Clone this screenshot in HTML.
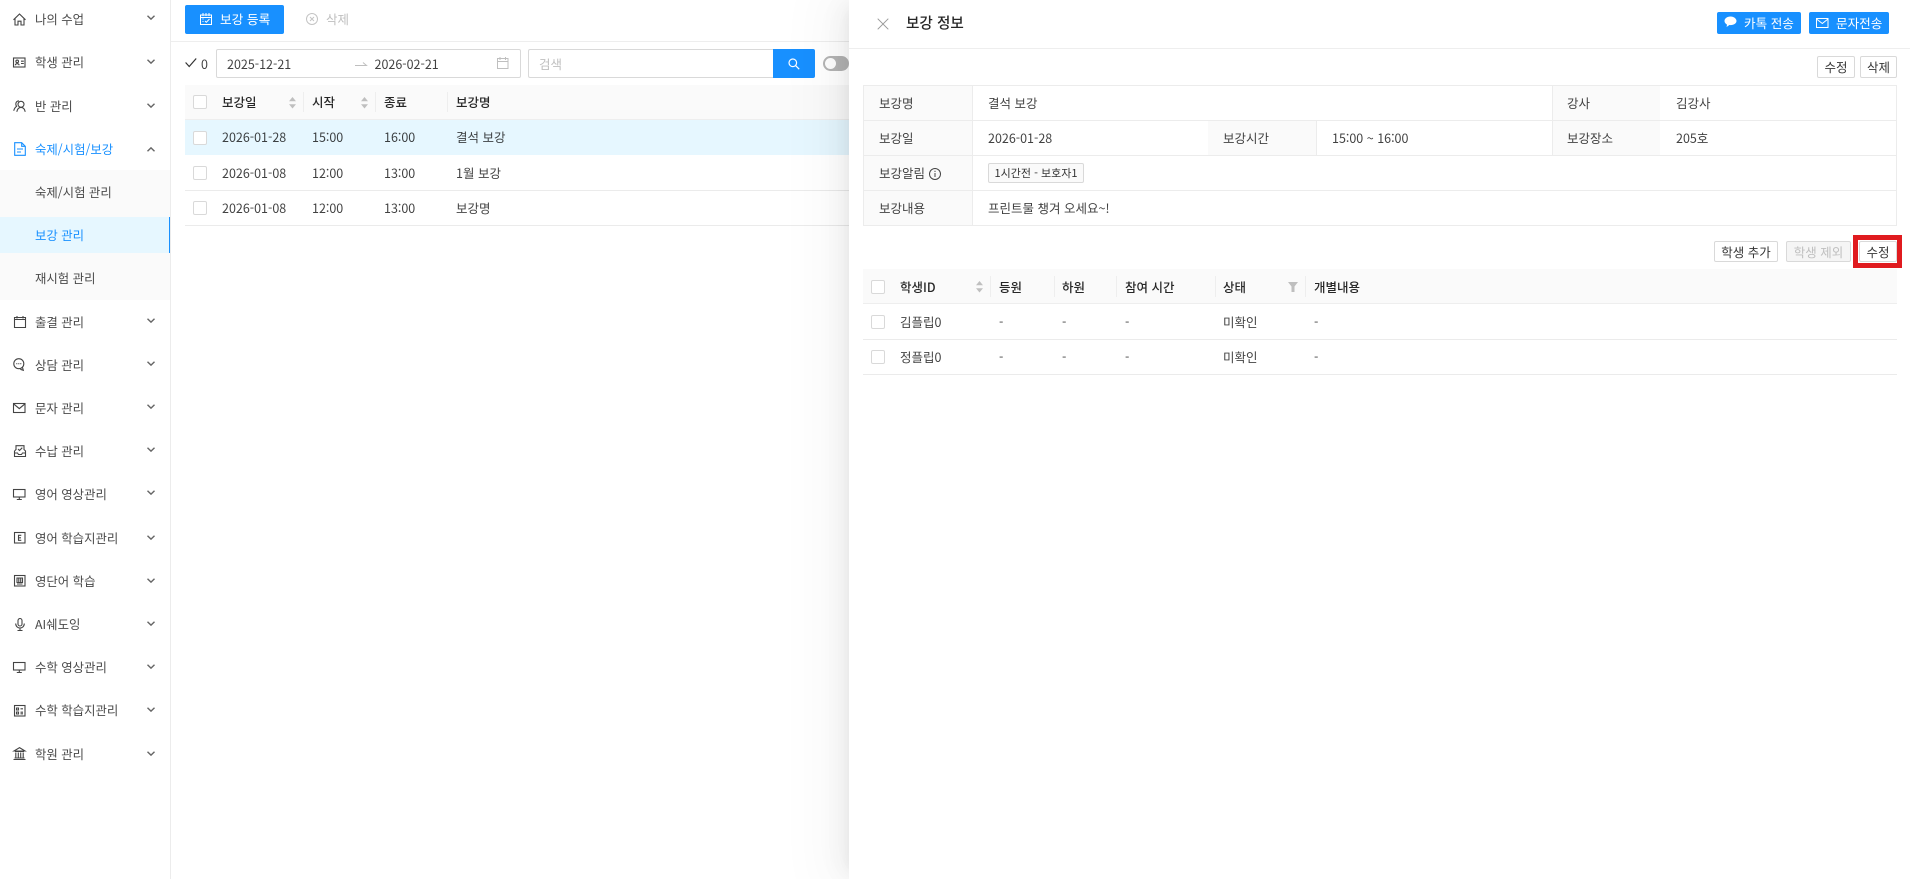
<!DOCTYPE html>
<html lang="ko"><head><meta charset="utf-8"><title>보강 관리</title>
<style>
*{box-sizing:border-box}
html,body{margin:0;padding:0;width:1910px;height:879px;overflow:hidden;background:#fff}
body{position:relative;font-family:"Liberation Sans","Noto Sans CJK KR",sans-serif;font-size:13px;color:#333}
#w{position:absolute;left:0;top:0;width:1910px;height:879px;filter:blur(.3px);overflow:hidden}
.t{position:absolute;height:20px;line-height:20px;white-space:nowrap;font-family:"Noto Sans CJK KR","Liberation Sans",sans-serif;font-size:12.5px;color:rgba(0,0,0,.75)}
.b{position:absolute}
.m{font-size:12.4px;color:#4a4a4a}
.h{font-weight:500;color:rgba(0,0,0,.85)}
.ck{position:absolute;width:14px;height:14px;border:1px solid #d9d9d9;border-radius:2px;background:#fff}
.dv{position:absolute;width:1px;background:#eee}
.ln{position:absolute;height:1px;background:#ebebeb}
.btn{position:absolute;border:1px solid #d9d9d9;border-radius:2px;background:#fff;text-align:center;font-family:"Noto Sans CJK KR",sans-serif;font-size:12.5px;color:rgba(0,0,0,.8);white-space:nowrap}
.pb{position:absolute;background:#1890ff;border-radius:2px;color:#fff}
svg{position:absolute;overflow:visible}
.ic{fill:none;stroke:#444;stroke-width:1.1}
.ch{fill:none;stroke:#666;stroke-width:1.4}
</style></head><body><div id="w">

<!-- sidebar -->
<div class="b" style="left:170px;top:0;width:1px;height:879px;background:#ececec"></div>
<div class="b" style="left:0;top:170px;width:170px;height:130px;background:#fafafa"></div>
<div class="b" style="left:0;top:217px;width:170px;height:36px;background:#e6f7ff;border-right:1px solid #1890ff"></div>

<svg class="ic" style="left:13px;top:13px" width="13" height="13" viewBox="0 0 13 13"><path d="M.5 6.800 6.500 1l6 5.800M2 5.600V12h3V8.200h3V12h3V5.600"/></svg>
<div class="t m" style="left:35px;top:9px">나의 수업</div>
<svg class="ic" style="left:13px;top:57px" width="13" height="11" viewBox="0 0 13 11"><rect x=".5" y="1" width="11.500" height="9"/><circle cx="4.200" cy="4.400" r="1.300"/><path d="M2.200 8.200c.5-2 3.500-2 4 0M8 4.200h2.800M8 6.500h2.800"/></svg>
<div class="t m" style="left:35px;top:52px">학생 관리</div>
<svg class="ic" style="left:13px;top:100px" width="14" height="13" viewBox="0 0 14 13"><circle cx="8" cy="4.300" r="3"/><path d="M3.800 11.800c.5-2.800 2-4.400 4.200-4.400s3.700 1.600 4.200 4.400M6 .9C4 .8 2.800 2.200 2.800 4c0 .9.300 1.700.8 2.300C2.200 7.300 1.200 8.800.7 10.800"/></svg>
<div class="t m" style="left:35px;top:96px">반 관리</div>
<svg class="ic" style="left:14px;top:142px;stroke:#1890ff" width="12" height="14" viewBox="0 0 12 14"><path d="M.7.700h7l3.600 3.600v9H.7zM7.700.700v3.600h3.600M3 7h6M3 10h4"/></svg>
<div class="t m" style="left:35px;top:139px;color:#1890ff">숙제/시험/보강</div>
<div class="t m" style="left:35px;top:182px">숙제/시험 관리</div>
<div class="t m" style="left:35px;top:225px;color:#1890ff">보강 관리</div>
<div class="t m" style="left:35px;top:268px">재시험 관리</div>
<svg class="ic" style="left:14px;top:316px" width="12" height="12" viewBox="0 0 12 12"><path d="M.5 1.500h11v10H.5zM.5 3.500h11M3 0v2.500M9 0v2.500"/></svg>
<div class="t m" style="left:35px;top:312px">출결 관리</div>
<svg class="ic" style="left:13px;top:358px" width="13" height="13" viewBox="0 0 13 13"><path d="M5.800.7a5 5 0 1 0 0 10 5 5 0 0 0 0-10z"/><path d="M9.500 9.500l.8 2.800-3-1M3.300 5.700h1M5.300 5.700h1M7.300 5.700h1"/></svg>
<div class="t m" style="left:35px;top:355px">상담 관리</div>
<svg class="ic" style="left:13px;top:403px" width="13" height="10" viewBox="0 0 13 10"><rect x=".5" y=".5" width="11.500" height="9"/><path d="m.5.800 5.800 4.800L12 .8"/></svg>
<div class="t m" style="left:35px;top:398px">문자 관리</div>
<svg class="ic" style="left:14px;top:445px" width="12" height="12" viewBox="0 0 12 12"><path d="M2 5V.7h8V5M.5 6v5.500h11V6L10 4.500M2 4.500.5 6M.5 8h3l1 1.500h3l1-1.500h3M4 4l1.500 1.500L8.300 2.700"/></svg>
<div class="t m" style="left:35px;top:441px">수납 관리</div>
<svg class="ic" style="left:13px;top:489px" width="13" height="11" viewBox="0 0 13 11"><rect x=".5" y=".5" width="11.500" height="7.500"/><path d="M6.300 8v2.500M3.800 10.500h5"/></svg>
<div class="t m" style="left:35px;top:484px">영어 영상관리</div>
<svg class="ic" style="left:14px;top:532px" width="12" height="12" viewBox="0 0 12 12"><rect x=".5" y=".5" width="10.500" height="10.500"/><path d="M7.300 3.300H4.500v5h2.800M4.500 5.800h2.500"/></svg>
<div class="t m" style="left:35px;top:528px">영어 학습지관리</div>
<svg class="ic" style="left:14px;top:575px" width="12" height="12" viewBox="0 0 12 12"><rect x=".5" y=".5" width="10.500" height="10.500"/><path d="M3 3h5.500v4.500H3zM4.800 3v4.500M6.700 3v4.500M3 9h5.500"/></svg>
<div class="t m" style="left:35px;top:571px">영단어 학습</div>
<svg class="ic" style="left:15px;top:618px" width="10" height="13" viewBox="0 0 10 13"><rect x="3" y=".5" width="4" height="7.500" rx="2"/><path d="M.7 5.500c0 6 8.600 6 8.600 0M5 9.800V12.500M2.500 12.500h5"/></svg>
<div class="t m" style="left:35px;top:614px">AI쉐도잉</div>
<svg class="ic" style="left:13px;top:662px" width="13" height="11" viewBox="0 0 13 11"><rect x=".5" y=".5" width="11.500" height="7.500"/><path d="M6.300 8v2.500M3.800 10.500h5"/></svg>
<div class="t m" style="left:35px;top:657px">수학 영상관리</div>
<svg class="ic" style="left:14px;top:705px" width="12" height="12" viewBox="0 0 12 12"><rect x=".5" y=".5" width="10.500" height="10.500"/><path d="M2.500 3h2v2h-2zM2.500 7h2v2h-2zM6.500 3.800h2.500M6.500 7.200h2.500M6.500 8.800h2.500"/></svg>
<div class="t m" style="left:35px;top:700px">수학 학습지관리</div>
<svg class="ic" style="left:13px;top:747px" width="13" height="13" viewBox="0 0 13 13"><path d="M6.500.6 12 4H1zM2 4.500h9M2.800 5.500v5M5.300 5.500v5M7.700 5.500v5M10.200 5.500v5M1.500 11h10M.5 12.500h12"/></svg>
<div class="t m" style="left:35px;top:744px">학원 관리</div>

<svg class="ch" style="left:147px;top:15px" width="8" height="5" viewBox="0 0 8 5"><path d="m.5.700 3.500 3.400L7.500.7"/></svg>
<svg class="ch" style="left:147px;top:59px" width="8" height="5" viewBox="0 0 8 5"><path d="m.5.700 3.500 3.400L7.500.7"/></svg>
<svg class="ch" style="left:147px;top:103px" width="8" height="5" viewBox="0 0 8 5"><path d="m.5.700 3.500 3.400L7.500.7"/></svg>
<svg class="ch" style="left:147px;top:147px" width="8" height="5" viewBox="0 0 8 5"><path d="m.5 4.300L4 .9l3.500 3.400"/></svg>
<svg class="ch" style="left:147px;top:318px" width="8" height="5" viewBox="0 0 8 5"><path d="m.5.700 3.500 3.400L7.500.7"/></svg>
<svg class="ch" style="left:147px;top:361px" width="8" height="5" viewBox="0 0 8 5"><path d="m.5.700 3.500 3.400L7.500.7"/></svg>
<svg class="ch" style="left:147px;top:404px" width="8" height="5" viewBox="0 0 8 5"><path d="m.5.700 3.500 3.400L7.500.7"/></svg>
<svg class="ch" style="left:147px;top:447px" width="8" height="5" viewBox="0 0 8 5"><path d="m.5.700 3.500 3.400L7.500.7"/></svg>
<svg class="ch" style="left:147px;top:490px" width="8" height="5" viewBox="0 0 8 5"><path d="m.5.700 3.500 3.400L7.500.7"/></svg>
<svg class="ch" style="left:147px;top:535px" width="8" height="5" viewBox="0 0 8 5"><path d="m.5.700 3.500 3.400L7.500.7"/></svg>
<svg class="ch" style="left:147px;top:578px" width="8" height="5" viewBox="0 0 8 5"><path d="m.5.700 3.500 3.400L7.500.7"/></svg>
<svg class="ch" style="left:147px;top:621px" width="8" height="5" viewBox="0 0 8 5"><path d="m.5.700 3.500 3.400L7.500.7"/></svg>
<svg class="ch" style="left:147px;top:664px" width="8" height="5" viewBox="0 0 8 5"><path d="m.5.700 3.500 3.400L7.500.7"/></svg>
<svg class="ch" style="left:147px;top:707px" width="8" height="5" viewBox="0 0 8 5"><path d="m.5.700 3.500 3.400L7.500.7"/></svg>
<svg class="ch" style="left:147px;top:751px" width="8" height="5" viewBox="0 0 8 5"><path d="m.5.700 3.500 3.400L7.500.7"/></svg>

<!-- main toolbar -->
<div class="pb" style="left:185px;top:5px;width:99px;height:29px"></div>
<svg style="left:200px;top:13px;fill:none;stroke:#fff;stroke-width:1" width="12" height="12" viewBox="0 0 12 12"><path d="M.5 2h11v9.500H.5zM3 0v3M6 0v3M9 0v3M.5 4.500h11M2.500 6h1M2.500 8.500h1M5 8l1.300 1.300L9.500 6"/></svg>
<div class="t" style="left:220px;top:9px;color:#fff;font-size:12.7px">보강 등록</div>
<svg style="left:306px;top:13px;fill:none;stroke:#c4c4c4;stroke-width:1" width="12" height="12" viewBox="0 0 12 12"><circle cx="6" cy="6" r="5.500"/><path d="m4 4 4 4M8 4 4 8"/></svg>
<div class="t" style="left:326px;top:9px;color:#bfbfbf">삭제</div>
<div class="ln" style="left:171px;top:41px;width:678px;background:#eee"></div>

<svg style="left:185px;top:58px;fill:none;stroke:#333;stroke-width:1.200" width="12" height="10" viewBox="0 0 12 10"><path d="m.6 4.500 3.600 4 7-8"/></svg>
<div class="t" style="left:201px;top:54px">0</div>
<div class="b" style="left:216px;top:49px;width:305px;height:29px;border:1px solid #d9d9d9;border-radius:2px"></div>
<div class="t" style="left:227px;top:54px">2025-12-21</div>
<svg style="left:355px;top:61px;fill:none;stroke:#bfbfbf;stroke-width:1" width="12" height="5" viewBox="0 0 12 5"><path d="M0 4.500h11.500L8 1.500"/></svg>
<div class="t" style="left:374.500px;top:54px">2026-02-21</div>
<svg style="left:497px;top:57px;fill:none;stroke:#bfbfbf;stroke-width:1" width="12" height="12" viewBox="0 0 12 12"><path d="M.5 1.500h10.500v10H.5zM.5 4.500h10.500M3 0v3M8.500 0v3"/></svg>
<div class="b" style="left:528px;top:49px;width:246px;height:29px;border:1px solid #d9d9d9;border-right:0;border-radius:2px 0 0 2px"></div>
<div class="t" style="left:539px;top:54px;color:#bfbfbf">검색</div>
<div class="b" style="left:773px;top:49px;width:42px;height:29px;background:#1890ff;border-radius:0 2px 2px 0"></div>
<svg style="left:788px;top:58px;fill:none;stroke:#fff;stroke-width:1.200" width="12" height="12" viewBox="0 0 12 12"><circle cx="4.800" cy="4.800" r="3.800"/><path d="m7.600 7.600 3.600 3.600"/></svg>
<div class="b" style="left:823px;top:56px;width:26px;height:15px;background:#b5b5b5;border-radius:8px"></div>
<div class="b" style="left:825px;top:58px;width:11px;height:11px;background:#fff;border-radius:50%"></div>

<!-- main table -->
<div class="b" style="left:185px;top:85px;width:664px;height:35px;background:#fafafa;border-bottom:1px solid #eee"></div>
<div class="b" style="left:185px;top:120px;width:664px;height:35px;background:#e6f7ff"></div>
<div class="ln" style="left:185px;top:190px;width:664px"></div>
<div class="ln" style="left:185px;top:225px;width:664px"></div>
<div class="dv" style="left:303px;top:92px;height:20px"></div>
<div class="dv" style="left:375px;top:92px;height:20px"></div>
<div class="dv" style="left:447px;top:92px;height:20px"></div>
<div class="ck" style="left:193px;top:95px"></div>
<div class="ck" style="left:193px;top:131px"></div>
<div class="ck" style="left:193px;top:166px"></div>
<div class="ck" style="left:193px;top:201px"></div>
<div class="t h" style="left:222px;top:92px">보강일</div>
<div class="t h" style="left:312px;top:92px">시작</div>
<div class="t h" style="left:384px;top:92px">종료</div>
<div class="t h" style="left:456px;top:92px">보강명</div>
<svg style="left:288px;top:97px;fill:#bfbfbf" width="9" height="12" viewBox="0 0 9 12"><path d="M4.500 0 8 4.300H1zM4.500 11.500 8 7.200H1z"/></svg>
<svg style="left:360px;top:97px;fill:#bfbfbf" width="9" height="12" viewBox="0 0 9 12"><path d="M4.500 0 8 4.300H1zM4.500 11.500 8 7.200H1z"/></svg>
<div class="t" style="left:222px;top:127px">2026-01-28</div><div class="t" style="left:312px;top:127px">15:00</div><div class="t" style="left:384px;top:127px">16:00</div><div class="t" style="left:456px;top:127px">결석 보강</div>
<div class="t" style="left:222px;top:163px">2026-01-08</div><div class="t" style="left:312px;top:163px">12:00</div><div class="t" style="left:384px;top:163px">13:00</div><div class="t" style="left:456px;top:163px">1월 보강</div>
<div class="t" style="left:222px;top:198px">2026-01-08</div><div class="t" style="left:312px;top:198px">12:00</div><div class="t" style="left:384px;top:198px">13:00</div><div class="t" style="left:456px;top:198px">보강명</div>

<!-- drawer -->
<div class="b" style="left:849px;top:0;width:1061px;height:879px;background:#fff;box-shadow:-6px 0 16px -8px rgba(0,0,0,.08),-9px 0 28px 0 rgba(0,0,0,.05),-12px 0 48px 16px rgba(0,0,0,.03)"></div>
<div class="ln" style="left:849px;top:48px;width:1061px;background:#eee"></div>
<svg style="left:877px;top:18px;fill:none;stroke:#999;stroke-width:1" width="12" height="12" viewBox="0 0 12 12"><path d="m.7.700 10.600 10.600M11.300.7.700 11.300"/></svg>
<div class="t" style="left:906px;top:13px;font-size:14.600px;font-weight:500;color:rgba(0,0,0,.85)">보강 정보</div>
<div class="pb" style="left:1717px;top:12px;width:84px;height:22px"></div>
<svg style="left:1724px;top:16px;fill:#fff" width="13" height="12" viewBox="0 0 13 12"><path d="M6.500.5C3 .5.500 2.500.500 5c0 1.500 1 2.800 2.500 3.600L2.600 11l2.800-2c.4 0 .7.100 1.100.100 3.500 0 6-1.900 6-4.100S10 .5 6.500.5z"/></svg>
<div class="t" style="left:1744px;top:13px;color:#fff;font-size:12.600px">카톡 전송</div>
<div class="pb" style="left:1809px;top:12px;width:80px;height:22px"></div>
<svg style="left:1816px;top:18px;fill:none;stroke:#fff;stroke-width:1" width="13" height="10" viewBox="0 0 13 10"><rect x=".5" y=".5" width="11.500" height="9"/><path d="m.5 1 5.800 4.500L12 1"/></svg>
<div class="t" style="left:1836px;top:13px;color:#fff;font-size:12.600px">문자전송</div>
<div class="btn" style="left:1817px;top:56px;width:38px;height:22px;line-height:20px">수정</div>
<div class="btn" style="left:1860px;top:56px;width:37px;height:22px;line-height:20px">삭제</div>

<!-- info table -->
<div class="b" style="left:863px;top:85px;width:1034px;height:141px;border:1px solid #ececec"></div>
<div class="b" style="left:864px;top:86px;width:109px;height:139px;background:#fafafa;border-right:1px solid #ececec"></div>
<div class="b" style="left:1208px;top:121px;width:109px;height:34px;background:#fafafa;border-right:1px solid #ececec"></div>
<div class="b" style="left:1552px;top:86px;width:108px;height:69px;background:#fafafa;border-left:1px solid #ececec"></div>
<div class="ln" style="left:864px;top:120px;width:1032px;background:#ececec"></div>
<div class="ln" style="left:864px;top:155px;width:1032px;background:#ececec"></div>
<div class="ln" style="left:864px;top:190px;width:1032px;background:#ececec"></div>
<div class="t" style="left:879px;top:93px">보강명</div><div class="t" style="left:988px;top:93px">결석 보강</div><div class="t" style="left:1567px;top:93px">강사</div><div class="t" style="left:1676px;top:93px">김강사</div>
<div class="t" style="left:879px;top:128px">보강일</div><div class="t" style="left:988px;top:128px">2026-01-28</div><div class="t" style="left:1223px;top:128px">보강시간</div><div class="t" style="left:1332px;top:128px">15:00 ~ 16:00</div><div class="t" style="left:1567px;top:128px">보강장소</div><div class="t" style="left:1676px;top:128px">205호</div>
<div class="t" style="left:879px;top:163px">보강알림</div>
<svg style="left:929px;top:168px;fill:none;stroke:#444;stroke-width:1" width="12" height="12" viewBox="0 0 12 12"><circle cx="6" cy="6" r="5.500"/><path d="M6 5v4M6 2.800v1.200"/></svg>
<div class="btn" style="left:988px;top:163px;width:96px;height:20px;line-height:18px;font-size:11px;background:#fafafa">1시간전 - 보호자1</div>
<div class="t" style="left:879px;top:198px">보강내용</div><div class="t" style="left:988px;top:198px">프린트물 챙겨 오세요~!</div>

<!-- student actions -->
<div class="btn" style="left:1714px;top:241px;width:64px;height:21px;line-height:19px">학생 추가</div>
<div class="btn" style="left:1786px;top:241px;width:65px;height:21px;line-height:19px;background:#f5f5f5;color:#bfbfbf">학생 제외</div>
<div class="btn" style="left:1859px;top:241px;width:38px;height:21px;line-height:19px">수정</div>
<div class="b" style="left:1853px;top:235px;width:49px;height:33px;border:5px solid #e01b1f"></div>

<!-- student table -->
<div class="b" style="left:863px;top:269px;width:1034px;height:35px;background:#fafafa;border-bottom:1px solid #eee"></div>
<div class="ln" style="left:863px;top:339px;width:1034px"></div>
<div class="ln" style="left:863px;top:374px;width:1034px"></div>
<div class="dv" style="left:990px;top:276px;height:21px"></div>
<div class="dv" style="left:1054px;top:276px;height:21px"></div>
<div class="dv" style="left:1116px;top:276px;height:21px"></div>
<div class="dv" style="left:1215px;top:276px;height:21px"></div>
<div class="dv" style="left:1305px;top:276px;height:21px"></div>
<div class="ck" style="left:871px;top:280px"></div>
<div class="ck" style="left:871px;top:315px"></div>
<div class="ck" style="left:871px;top:350px"></div>
<div class="t h" style="left:900px;top:277px">학생ID</div>
<svg style="left:975px;top:281px;fill:#bfbfbf" width="9" height="12" viewBox="0 0 9 12"><path d="M4.500 0 8 4.300H1zM4.500 11.500 8 7.200H1z"/></svg>
<div class="t h" style="left:999px;top:277px">등원</div>
<div class="t h" style="left:1062px;top:277px">하원</div>
<div class="t h" style="left:1125px;top:277px">참여 시간</div>
<div class="t h" style="left:1223px;top:277px">상태</div>
<svg style="left:1288px;top:282px;fill:#bfbfbf" width="10" height="10" viewBox="0 0 10 10"><path d="M0 0h10L6.500 4.500V10h-3V4.500z"/></svg>
<div class="t h" style="left:1314px;top:277px">개별내용</div>
<div class="t" style="left:900px;top:312px">김플립0</div><div class="t" style="left:999px;top:312px">-</div><div class="t" style="left:1062px;top:312px">-</div><div class="t" style="left:1125px;top:312px">-</div><div class="t" style="left:1223px;top:312px">미확인</div><div class="t" style="left:1314px;top:312px">-</div>
<div class="t" style="left:900px;top:347px">정플립0</div><div class="t" style="left:999px;top:347px">-</div><div class="t" style="left:1062px;top:347px">-</div><div class="t" style="left:1125px;top:347px">-</div><div class="t" style="left:1223px;top:347px">미확인</div><div class="t" style="left:1314px;top:347px">-</div>
</div></body></html>
